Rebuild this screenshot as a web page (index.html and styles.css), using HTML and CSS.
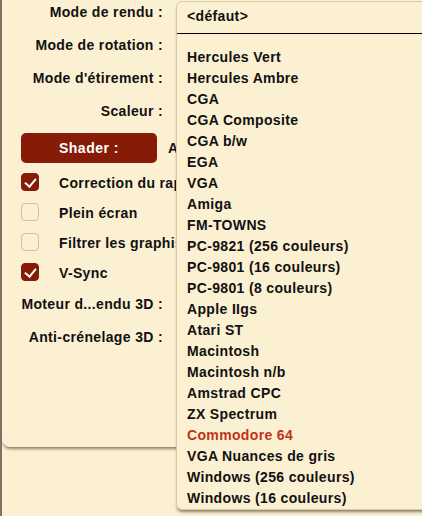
FILE: index.html
```html
<!DOCTYPE html>
<html lang="fr">

<head>
  <meta charset="UTF-8" />
  <meta name="viewport" content="width=device-width, initial-scale=1.0" />
  <title>Options graphiques</title>
  <link rel="stylesheet" href="styles.css">
</head>

<body>
  <div class="screen">
    <div class="dialog">
      <div class="field"><span class="label">Mode de rendu :</span></div>
      <div class="field"><span class="label">Mode de rotation :</span></div>
      <div class="field"><span class="label">Mode d'étirement :</span></div>
      <div class="field"><span class="label">Scaleur :</span></div>
      <div class="shader-row">
        <button class="shader-btn">Shader :</button>
        <span class="shader-value">Aucun</span>
      </div>
      <div class="check-row">
        <span class="checkbox checked"></span>
        <span class="check-label">Correction du rapport d'aspect</span>
      </div>
      <div class="check-row">
        <span class="checkbox"></span>
        <span class="check-label">Plein écran</span>
      </div>
      <div class="check-row">
        <span class="checkbox"></span>
        <span class="check-label">Filtrer les graphismes</span>
      </div>
      <div class="check-row">
        <span class="checkbox checked"></span>
        <span class="check-label">V-Sync</span>
      </div>
      <div class="field field-3d"><span class="label">Moteur d...endu 3D :</span></div>
      <div class="field"><span class="label">Anti-crénelage 3D :</span></div>
    </div>

    <!-- liste déroulante ouverte, par-dessus le dialogue -->
    <div class="popup">
      <div class="popup-head">&lt;défaut&gt;</div>
      <ul class="popup-list">
        <li>Hercules Vert</li>
        <li>Hercules Ambre</li>
        <li>CGA</li>
        <li>CGA Composite</li>
        <li>CGA b/w</li>
        <li>EGA</li>
        <li>VGA</li>
        <li>Amiga</li>
        <li>FM-TOWNS</li>
        <li>PC-9821 (256 couleurs)</li>
        <li>PC-9801 (16 couleurs)</li>
        <li>PC-9801 (8 couleurs)</li>
        <li>Apple IIgs</li>
        <li>Atari ST</li>
        <li>Macintosh</li>
        <li>Macintosh n/b</li>
        <li>Amstrad CPC</li>
        <li>ZX Spectrum</li>
        <li class="active">Commodore 64</li>
        <li>VGA Nuances de gris</li>
        <li>Windows (256 couleurs)</li>
        <li>Windows (16 couleurs)</li>
      </ul>
    </div>
  </div>
</body>

</html>
```

FILE: styles.css
```css
* {
  box-sizing: border-box;
}

body {
  margin: 0;
  background: #fbf0d2;
  font-family: "Liberation Sans", Arial, sans-serif;
  font-weight: bold;
  font-size: 14px;
  line-height: 21px;
  letter-spacing: 0.35px;
  color: #111;
}

.screen {
  position: relative;
  height: 516px;
  overflow: hidden;
  border-left: 2px solid #7c7462;
}

.dialog {
  height: 447px;
  padding-top: 2px;
  background: #fbf0d2;
  border-bottom-left-radius: 8px;
  box-shadow: 0 3px 3px -1px rgba(70, 60, 40, 0.6);
}

.field {
  display: grid;
  grid-template-columns: 161px 1fr;
  column-gap: 13px;
  height: 33px;
}

.field .label {
  text-align: right;
  white-space: nowrap;
}

.field-3d {
  margin-top: 1px;
}

.shader-row {
  display: flex;
  align-items: center;
  height: 30px;
  margin-top: -1px;
  margin-bottom: 10px;
  padding-left: 19px;
}

.shader-btn {
  width: 136px;
  height: 30px;
  border: none;
  border-radius: 5px;
  background: #861c08;
  color: #fff;
  font: inherit;
  letter-spacing: 0.5px;
  cursor: pointer;
}

.shader-value {
  margin-left: 11px;
  white-space: nowrap;
}

.check-row {
  display: flex;
  align-items: flex-start;
  gap: 20px;
  height: 30px;
  padding-left: 19px;
}

.checkbox {
  flex: none;
  width: 18px;
  height: 18px;
  border: 1px solid #cfc2a4;
  border-radius: 4px;
  background: #fbf0d2;
  position: relative;
}

.checkbox.checked {
  background: #861c08;
  border-color: #861c08;
}

.checkbox.checked::after {
  content: "";
  position: absolute;
  left: 5px;
  top: 2px;
  width: 5px;
  height: 9px;
  border: solid #fff;
  border-width: 0 2.5px 2.5px 0;
  transform: rotate(40deg);
}

.check-label {
  white-space: nowrap;
}

.popup {
  position: absolute;
  left: 174px;
  top: 1px;
  width: 262px;
  height: 509px;
  background: #fbf0d2;
  border: 1px solid #d8caa6;
  border-radius: 6px;
  box-shadow: 0 3px 3px -1px rgba(70, 60, 40, 0.6);
  padding-top: 4px;
}

.popup-head {
  padding: 0 10px 6px;
  border-bottom: 1px solid #000;
}

.popup-list {
  margin: 13px 0 0;
  padding: 0 10px;
  list-style: none;
}

.popup-list li {
  height: 21px;
  white-space: nowrap;
}

.popup-list li.active {
  color: #c3311a;
}
```
